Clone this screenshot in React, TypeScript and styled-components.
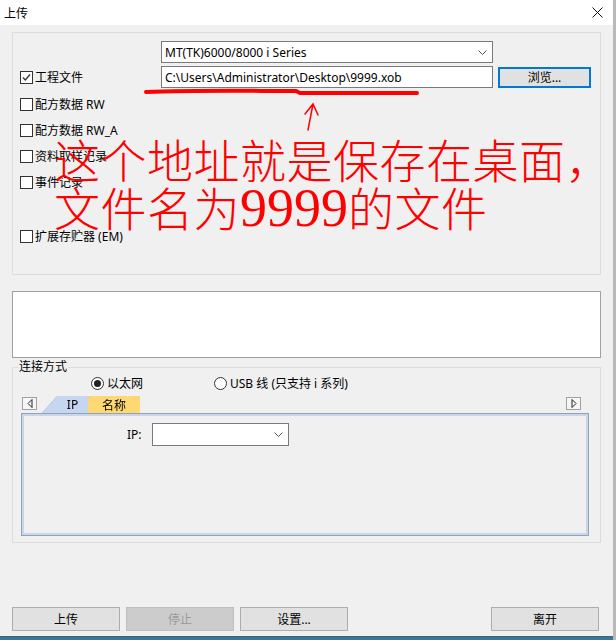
import { FC } from 'react';
import styled, { createGlobalStyle } from 'styled-components';

const GlobalStyle = createGlobalStyle`
  body {
    margin: 0;
    background: #f0f0f0;
    font-family: "Noto Sans", "Noto Sans CJK SC", sans-serif;
    font-size: 12px;
    color: #000;
  }
`;

const Window = styled.div`
  position: relative;
  width: 616px;
  height: 640px;
  display: flex;
  flex-direction: column;
  background: #f0f0f0;
  overflow: hidden;
  box-sizing: border-box;
  border-right: 3px solid #b9b9b9;
`;

const TitleBar = styled.div`
  height: 25px;
  flex: none;
  background: #fff;
  display: flex;
  align-items: center;
  justify-content: space-between;
  padding: 0 10px 0 4px;
  font-size: 12px;
`;

const Content = styled.div`
  padding: 7px 0 0 12px;
  width: 589px;
`;

const GroupBox = styled.div`
  box-sizing: border-box;
  height: 243px;
  border: 1px solid #dcdcdc;
  padding: 8px 0 0 7px;
`;

const Row = styled.div<{ $indent?: number; $top?: number }>`
  display: flex;
  align-items: center;
  margin-left: ${(p) => p.$indent ?? 0}px;
  margin-top: ${(p) => p.$top ?? 0}px;
`;

const Select = styled.div<{ $w: number; $h: number }>`
  box-sizing: border-box;
  width: ${(p) => p.$w}px;
  height: ${(p) => p.$h}px;
  background: #fff;
  border: 1px solid #7a7a7a;
  display: flex;
  align-items: center;
  justify-content: space-between;
  padding: 0 5px 0 3px;
  white-space: nowrap;
`;

const TextInput = styled.div`
  box-sizing: border-box;
  width: 332px;
  height: 22px;
  background: #fff;
  border: 1px solid #7a7a7a;
  display: flex;
  align-items: center;
  padding: 0 3px;
  white-space: nowrap;
`;

const BrowseButton = styled.div`
  box-sizing: border-box;
  margin-left: 5px;
  width: 93px;
  height: 21px;
  background: #e1e1e1;
  border: 2px solid #0078d7;
  display: flex;
  align-items: center;
  justify-content: center;
`;

const CheckLabel = styled.div<{ $w?: number; $h?: number }>`
  display: flex;
  align-items: center;
  gap: 2px;
  height: ${(p) => p.$h ?? 26}px;
  width: ${(p) => (p.$w ? `${p.$w}px` : 'auto')};
  white-space: nowrap;
`;

const Box = styled.span`
  box-sizing: border-box;
  width: 13px;
  height: 13px;
  border: 1px solid #333;
  background: #fff;
  display: inline-flex;
  align-items: center;
  justify-content: center;
`;

const CheckList = styled.div`
  margin-top: 3px;
  display: flex;
  flex-direction: column;
`;

const Spacer = styled.div<{ $h: number }>`
  height: ${(p) => p.$h}px;
`;

const LogBox = styled.div`
  box-sizing: border-box;
  margin-top: 16px;
  height: 67px;
  background: #fff;
  border: 1px solid #a0a0a0;
`;

const Fieldset = styled.fieldset`
  box-sizing: border-box;
  margin: 2px 0 0;
  padding: 0 0 0 5px;
  height: 183px;
  border: 1px solid #dcdcdc;
  min-width: 0;
`;

const Legend = styled.legend`
  padding: 0 1px;
  line-height: 14px;
  font-size: 12px;
`;

const RadioLabel = styled.div<{ $w?: number }>`
  display: flex;
  align-items: center;
  gap: 3px;
  height: 18px;
  width: ${(p) => (p.$w ? `${p.$w}px` : 'auto')};
  white-space: nowrap;
`;

const Radio = styled.span<{ $on?: boolean }>`
  box-sizing: border-box;
  width: 13px;
  height: 13px;
  border-radius: 50%;
  border: 1px solid #333;
  background: #fff;
  display: inline-flex;
  align-items: center;
  justify-content: center;
  &::after {
    content: '';
    width: 7px;
    height: 7px;
    border-radius: 50%;
    background: ${(p) => (p.$on ? '#222' : 'transparent')};
  }
`;

const TabStrip = styled.div`
  display: flex;
  align-items: flex-end;
  margin: 4px 0 0 4px;
  height: 17px;
  width: 565px;
`;

const ScrollButton = styled.div<{ $right?: boolean }>`
  box-sizing: border-box;
  width: 15px;
  height: 13px;
  margin-bottom: 3px;
  margin-left: ${(p) => (p.$right ? 'auto' : '0')};
  margin-right: ${(p) => (p.$right ? '6px' : '5px')};
  background: #f7f7f7;
  border: 1px solid #a0a0a0;
  display: flex;
  align-items: center;
  justify-content: center;
`;

const TabOutline = styled.div`
  filter: drop-shadow(0 0 0.6px #7f8aa0);
`;

const Tab = styled.div<{ $fill: string; $w: number; $slant?: boolean }>`
  box-sizing: border-box;
  width: ${(p) => p.$w}px;
  height: 17px;
  background: ${(p) => p.$fill};
  padding-left: ${(p) => (p.$slant ? 15 : 0)}px;
  display: flex;
  align-items: center;
  justify-content: center;
  font-size: 12px;
  clip-path: ${(p) =>
    p.$slant ? 'polygon(0 100%, 15px 0, 100% 0, 100% 100%)' : 'none'};
  border-radius: ${(p) => (p.$slant ? '0 3px 0 0' : '3px 3px 0 0')};
`;

const TabPanel = styled.div`
  box-sizing: border-box;
  margin-left: 3px;
  width: 568px;
  height: 123px;
  border: 1px solid #93a2ba;
  box-shadow: inset 0 0 0 2px #c9d5e9;
  padding: 9px 0 0 105px;
`;

const FieldLabel = styled.span`
  width: 15px;
  margin-right: 10px;
  white-space: nowrap;
`;

const ButtonBar = styled.div`
  margin-top: auto;
  display: flex;
  gap: 6px;
  padding: 0 14px 5px 12px;
`;

const Button = styled.div<{ $disabled?: boolean; $push?: boolean }>`
  box-sizing: border-box;
  width: 108px;
  height: 24px;
  margin-left: ${(p) => (p.$push ? 'auto' : '0')};
  background: ${(p) => (p.$disabled ? '#cccccc' : '#e1e1e1')};
  color: ${(p) => (p.$disabled ? '#9a9a9a' : '#000')};
  border: 1px solid ${(p) => (p.$disabled ? '#bfbfbf' : '#adadad')};
  display: flex;
  align-items: center;
  justify-content: center;
`;

const BottomEdge = styled.div`
  height: 3px;
  flex: none;
  border-top: 1px solid #5b5b5b;
  background: #2f7aa2;
`;

const Annotation = styled.div`
  position: absolute;
  inset: 0;
  pointer-events: none;
`;

const AnnotationText = styled.div`
  position: absolute;
  left: 54px;
  top: 134px;
  color: #ff0000;
  font-family: "Noto Sans CJK SC", sans-serif;
  font-size: 46px;
  letter-spacing: 0.5px;
  line-height: 48px;
  font-weight: 300;
  white-space: nowrap;
`;

const Digits = styled.span`
  font-family: "Liberation Serif", serif;
  font-weight: 400;
  font-size: 54px;
  letter-spacing: 0;
`;

const Chevron: FC = () => (
  <svg width="9" height="5" viewBox="0 0 9 5">
    <path d="M0.5 0.5 L4.5 4.5 L8.5 0.5" fill="none" stroke="#555" strokeWidth="1" />
  </svg>
);

const Check: FC<{ checked?: boolean }> = ({ checked }) => (
  <Box>
    {checked && (
      <svg width="11" height="11" viewBox="0 0 11 11">
        <path d="M2 5.5 L4.3 8 L9 2.5" fill="none" stroke="#333" strokeWidth="1.3" />
      </svg>
    )}
  </Box>
);

const Arrow: FC<{ right?: boolean }> = ({ right }) => (
  <svg width="6" height="9" viewBox="0 0 6 9">
    <path
      d={right ? 'M1 0.5 L5 4.5 L1 8.5 Z' : 'M5 0.5 L1 4.5 L5 8.5 Z'}
      fill="none"
      stroke="#222"
      strokeWidth="1"
    />
  </svg>
);

const checks = ['配方数据 RW', '配方数据 RW_A', '资料取样记录', '事件记录'];

const App: FC = () => {
  return (
    <Window>
      <GlobalStyle />
      <TitleBar>
        <span>上传</span>
        <svg width="11" height="11" viewBox="0 0 11 11">
          <path d="M0.5 0.5 L10.5 10.5 M10.5 0.5 L0.5 10.5" stroke="#111" strokeWidth="1" />
        </svg>
      </TitleBar>
      <Content>
        <GroupBox>
          <Row $indent={141}>
            <Select $w={332} $h={22}>
              <span>MT(TK)6000/8000 i Series</span>
              <Chevron />
            </Select>
          </Row>
          <Row $top={3}>
            <CheckLabel $w={141} $h={22}>
              <Check checked />
              工程文件
            </CheckLabel>
            <TextInput>{'C:\\Users\\Administrator\\Desktop\\9999.xob'}</TextInput>
            <BrowseButton>浏览...</BrowseButton>
          </Row>
          <CheckList>
            {checks.map((c) => (
              <CheckLabel key={c}>
                <Check />
                {c}
              </CheckLabel>
            ))}
            <Spacer $h={28} />
            <CheckLabel>
              <Check />
              扩展存贮器 (EM)
            </CheckLabel>
          </CheckList>
        </GroupBox>
        <LogBox />
        <Fieldset>
          <Legend>连接方式</Legend>
          <Row $indent={73}>
            <RadioLabel $w={123}>
              <Radio $on />
              以太网
            </RadioLabel>
            <RadioLabel>
              <Radio />
              USB 线 (只支持 i 系列)
            </RadioLabel>
          </Row>
          <TabStrip>
            <ScrollButton>
              <Arrow />
            </ScrollButton>
            <TabOutline>
              <Tab $fill="#c6d6f1" $w={46} $slant>
                IP
              </Tab>
            </TabOutline>
            <TabOutline>
              <Tab $fill="#fdd873" $w={52}>
                名称
              </Tab>
            </TabOutline>
            <ScrollButton $right>
              <Arrow right />
            </ScrollButton>
          </TabStrip>
          <TabPanel>
            <Row>
              <FieldLabel>IP:</FieldLabel>
              <Select $w={137} $h={23}>
                <span />
                <Chevron />
              </Select>
            </Row>
          </TabPanel>
        </Fieldset>
      </Content>
      <ButtonBar>
        <Button>上传</Button>
        <Button $disabled>停止</Button>
        <Button>设置...</Button>
        <Button $push>离开</Button>
      </ButtonBar>
      <BottomEdge />
      <Annotation>
        <svg width="616" height="640" viewBox="0 0 616 640">
          <path
            d="M146 92 C200 90 250 91 296 91 L300 93 C340 93 380 93 417 93"
            fill="none"
            stroke="#ff0000"
            strokeWidth="4"
            strokeLinecap="round"
          />
          <path
            d="M308 130 L313 104 M305 114 L313 104 L318 115"
            fill="none"
            stroke="#ff0000"
            strokeWidth="1.5"
            strokeLinecap="round"
          />
        </svg>
        <AnnotationText>
          这个地址就是保存在桌面，
          <br />
          文件名为<Digits>9999</Digits>的文件
        </AnnotationText>
      </Annotation>
    </Window>
  );
};

export default App;
